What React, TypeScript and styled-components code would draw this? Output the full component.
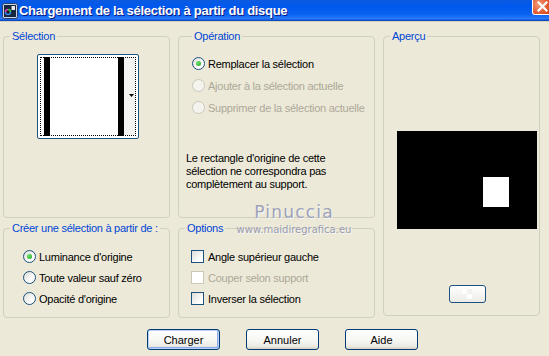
import React from "react"
import styled, { createGlobalStyle } from "styled-components"

const GlobalStyle = createGlobalStyle`
    html, body {
        margin: 0;
        padding: 0;
        background: #ece9d8;
    }
`

const FONT = `"Liberation Sans", Arial, sans-serif`

export default function App() {
    return (
        <>
            <GlobalStyle />
            <Window>
                <TitleBar>
                    <AppIcon />
                    <Title>Chargement de la sélection à partir du disque</Title>
                    <CloseButton>
                        <svg width="11" height="11" viewBox="0 0 11 11">
                            <path d="M1.5 1.5 L9.5 9.5 M9.5 1.5 L1.5 9.5" stroke="#fff" strokeWidth="2.2" strokeLinecap="square" />
                        </svg>
                    </CloseButton>
                </TitleBar>
                <Body>
                    <Groups>
                        <Group>
                            <Legend>Sélection</Legend>
                            <Swatch>
                                <FocusRect>
                                    <Bar />
                                    <Paper />
                                    <Bar />
                                    <DropTail>
                                        <svg width="5" height="3" viewBox="0 0 5 3">
                                            <path d="M0 0 H5 L2.5 3 Z" fill="#000" />
                                        </svg>
                                    </DropTail>
                                </FocusRect>
                            </Swatch>
                        </Group>

                        <Group $padLeft={7}>
                            <Legend>Opération</Legend>
                            <ChoiceList $top={13} $indent={6} $gap={7}>
                                <Radio checked label="Remplacer la sélection" />
                                <Radio disabled label="Ajouter à la sélection actuelle" />
                                <Radio disabled label="Supprimer de la sélection actuelle" />
                            </ChoiceList>
                            <Note>
                                Le rectangle d'origine de cette<br />
                                sélection ne correspondra pas<br />
                                complètement au support.
                            </Note>
                        </Group>

                        <Group $rows="1 / span 2" $col={3} $height={286}>
                            <Legend>Aperçu</Legend>
                            <PreviewArea>
                                <svg width="140" height="98" viewBox="0 0 140 98">
                                    <rect width="140" height="98" fill="#000" />
                                    <rect x="86" y="46" width="26" height="30" fill="#fff" />
                                </svg>
                                <TinyButton />
                            </PreviewArea>
                        </Group>

                        <Group>
                            <Legend>Créer une sélection à partir de :</Legend>
                            <ChoiceList $top={14} $indent={19} $gap={6}>
                                <Radio checked label="Luminance d'origine" />
                                <Radio label="Toute valeur sauf zéro" />
                                <Radio label="Opacité d'origine" />
                            </ChoiceList>
                        </Group>

                        <Group>
                            <Legend>Options</Legend>
                            <ChoiceList $top={14} $indent={12} $gap={6}>
                                <Check label="Angle supérieur gauche" />
                                <Check disabled label="Couper selon support" />
                                <Check label="Inverser la sélection" />
                            </ChoiceList>
                        </Group>
                    </Groups>

                    <ButtonRow>
                        <PushButton $default>Charger</PushButton>
                        <PushButton>Annuler</PushButton>
                        <PushButton>Aide</PushButton>
                    </ButtonRow>

                    <Watermark>
                        <WatermarkName>Pinuccia</WatermarkName>
                        <WatermarkUrl>www.maidiregrafica.eu</WatermarkUrl>
                    </Watermark>
                </Body>
            </Window>
        </>
    )
}

const Radio = ({ label, checked, disabled }: { label: string; checked?: boolean; disabled?: boolean }) => (
    <Choice $disabled={disabled}>
        <RadioCircle $disabled={disabled}>{checked && <RadioDot />}</RadioCircle>
        {label}
    </Choice>
)

const Check = ({ label, disabled }: { label: string; disabled?: boolean }) => (
    <Choice $disabled={disabled} $gap={4}>
        <CheckBox $disabled={disabled} />
        {label}
    </Choice>
)

const AppIcon = () => (
    <svg width="16" height="16" viewBox="0 0 16 16" style={{ flexShrink: 0 }}>
        <rect x="0.5" y="0.5" width="15" height="15" rx="2" fill="#c9d6e8" stroke="#2a3f66" />
        <rect x="2" y="2" width="12" height="12" fill="#16263f" />
        <circle cx="6" cy="9" r="3.2" fill="#1a1a1a" />
        <path d="M3.5 9 A2.5 2.5 0 0 1 6 6.5" stroke="#e03ab8" strokeWidth="1.6" fill="none" />
        <path d="M6 6.5 A2.5 2.5 0 0 1 8.5 9" stroke="#39c84a" strokeWidth="1.6" fill="none" />
        <path d="M8.5 9 A2.5 2.5 0 0 1 3.5 9" stroke="#3a7fe8" strokeWidth="1.6" fill="none" />
        <rect x="9.5" y="3" width="3.5" height="4" fill="#e8e8e8" />
    </svg>
)

const Window = styled.div`
    width: 549px;
    height: 356px;
    background: #ece9d8;
    overflow: hidden;
    font-family: ${FONT};
    font-size: 11px;
    letter-spacing: -0.25px;
    color: #000;
`

const TitleBar = styled.div`
    height: 21px;
    display: flex;
    align-items: center;
    padding-left: 2px;
    gap: 1px;
    background: linear-gradient(#0a5ae0 0%, #0058ee 30%, #0b63f2 70%, #2a7af8 88%, #1657d8 95%, #0040ab 100%);
    border-bottom: 1px solid #d6d2c2;
`

const Title = styled.div`
    flex: 1;
    color: #fff;
    font-family: ${FONT};
    font-weight: bold;
    font-size: 13px;
    letter-spacing: -0.3px;
    text-shadow: 1px 1px 0 #0a1883;
    white-space: nowrap;
`

const CloseButton = styled.div`
    align-self: flex-start;
    width: 21px;
    height: 15px;
    margin-right: -4px;
    flex-shrink: 0;
    display: flex;
    align-items: center;
    justify-content: center;
    padding-bottom: 1px;
    box-sizing: border-box;
    background: radial-gradient(circle at 30% 30%, #f49a7a, #e15a30 55%, #c63c12);
    border: 1px solid #fff;
    border-top: none;
    border-radius: 0 0 0 3px;
`

const Body = styled.div`
    position: relative;
    padding: 8px 0 0 3px;
`

const Groups = styled.div`
    display: grid;
    grid-template-columns: 167px 197px 157px;
    grid-template-rows: 188px 96px;
    column-gap: 8px;
    row-gap: 4px;
`

const Group = styled.fieldset<{ $padLeft?: number; $rows?: string; $col?: number; $height?: number }>`
    margin: 0;
    padding: 0 0 0 ${p => p.$padLeft ?? 0}px;
    min-width: 0;
    box-sizing: border-box;
    border: 1px solid #d0d0bf;
    border-radius: 4px;
    ${p => p.$rows && `grid-row: ${p.$rows};`}
    ${p => p.$col && `grid-column: ${p.$col};`}
    ${p => p.$height && `height: ${p.$height}px; align-self: start;`}
`

const Legend = styled.legend`
    margin-left: 6px;
    padding: 0 2px;
    line-height: 13px;
    color: #0046d5;
    font-size: 11px;
`

const Swatch = styled.div`
    width: 102px;
    height: 85px;
    margin: 11px 0 0 33px;
    box-sizing: border-box;
    border: 1px solid #1c5180;
    border-radius: 2px;
    padding: 2px;
    background: #fff;
`

const FocusRect = styled.div`
    height: 100%;
    box-sizing: border-box;
    border: 1px dotted #000;
    display: flex;
    padding-left: 3px;
`

const Bar = styled.div`
    width: 6px;
    background: #000;
    margin-top: -1px;
    margin-bottom: -1px;
`

const Paper = styled.div`
    width: 68px;
    background: #fff;
`

const DropTail = styled.div`
    flex: 1;
    background: #f3f3f1;
    display: flex;
    align-items: center;
    justify-content: flex-end;
    padding: 0 1px 2px 0;
`

const ChoiceList = styled.div<{ $top: number; $indent: number; $gap: number }>`
    display: flex;
    flex-direction: column;
    gap: ${p => p.$gap}px;
    padding: ${p => p.$top}px 0 0 ${p => p.$indent}px;
`

const Choice = styled.div<{ $disabled?: boolean; $gap?: number }>`
    display: flex;
    align-items: center;
    gap: ${p => p.$gap ?? 3}px;
    height: 15px;
    white-space: nowrap;
    color: ${p => (p.$disabled ? "#aca899" : "#000")};
`

const RadioCircle = styled.span<{ $disabled?: boolean }>`
    width: 13px;
    height: 13px;
    box-sizing: border-box;
    border-radius: 50%;
    flex-shrink: 0;
    display: flex;
    align-items: center;
    justify-content: center;
    border: 1px solid ${p => (p.$disabled ? "#cac8bb" : "#1c5180")};
    background: ${p => (p.$disabled ? "#f4f3ee" : "linear-gradient(135deg, #dcdcd7, #ffffff 70%)")};
`

const RadioDot = styled.span`
    width: 5px;
    height: 5px;
    border-radius: 50%;
    background: radial-gradient(circle at 35% 35%, #6de36d, #21a121);
`

const CheckBox = styled.span<{ $disabled?: boolean }>`
    width: 13px;
    height: 13px;
    box-sizing: border-box;
    flex-shrink: 0;
    border: 1px solid ${p => (p.$disabled ? "#cac8bb" : "#1c5180")};
    background: ${p => (p.$disabled ? "#fff" : "linear-gradient(135deg, #dcdcd7, #ffffff 75%)")};
`

const Note = styled.p`
    margin: 37px 0 0;
    line-height: 13px;
`

const PreviewArea = styled.div`
    display: flex;
    flex-direction: column;
    align-items: center;
    width: 140px;
    margin: 88px 0 0 13px;

    svg {
        display: block;
    }
`

const TinyButton = styled.div`
    width: 37px;
    height: 18px;
    margin-top: 56px;
    box-sizing: border-box;
    border: 1px solid #1c5180;
    border-radius: 3px;
    background:
        conic-gradient(#f2f2ee 25%, #ffffff 0 50%, #f2f2ee 0 75%, #ffffff 0) 12px 3px / 10px 10px,
        linear-gradient(#ffffff, #ecebe6);
    background-repeat: no-repeat;
`

const ButtonRow = styled.div`
    display: flex;
    gap: 26px;
    padding-left: 144px;
    margin-top: 11px;
`

const PushButton = styled.button<{ $default?: boolean }>`
    width: 73px;
    height: 21px;
    padding: 0;
    font-family: ${FONT};
    font-size: 11px;
    color: #000;
    border: 1px solid #003c74;
    border-radius: 3px;
    background: linear-gradient(#ffffff 0%, #f7f7f4 50%, #ecebe6 85%, #d6d0c5 100%);
    box-shadow: ${p => (p.$default ? "inset 0 0 0 1px #b9d1f8, inset -1px -1px 0 1px #8dabe8" : "none")};
`

const Watermark = styled.div`
    position: absolute;
    left: 230px;
    top: 181px;
    width: 128px;
    display: flex;
    flex-direction: column;
    align-items: center;
    pointer-events: none;
    letter-spacing: 0;
`

const WatermarkName = styled.div`
    font-family: "DejaVu Sans", sans-serif;
    font-size: 17px;
    letter-spacing: 1.2px;
    line-height: 18px;
    color: #9ea2b8;
    text-shadow: 1px 1px 0 #f6f6f6;
`

const WatermarkUrl = styled.div`
    margin-top: 3px;
    font-family: "DejaVu Sans", sans-serif;
    font-size: 10px;
    line-height: 11px;
    color: #9a9cac;
    text-shadow: 1px 1px 0 #f6f6f6;
`
